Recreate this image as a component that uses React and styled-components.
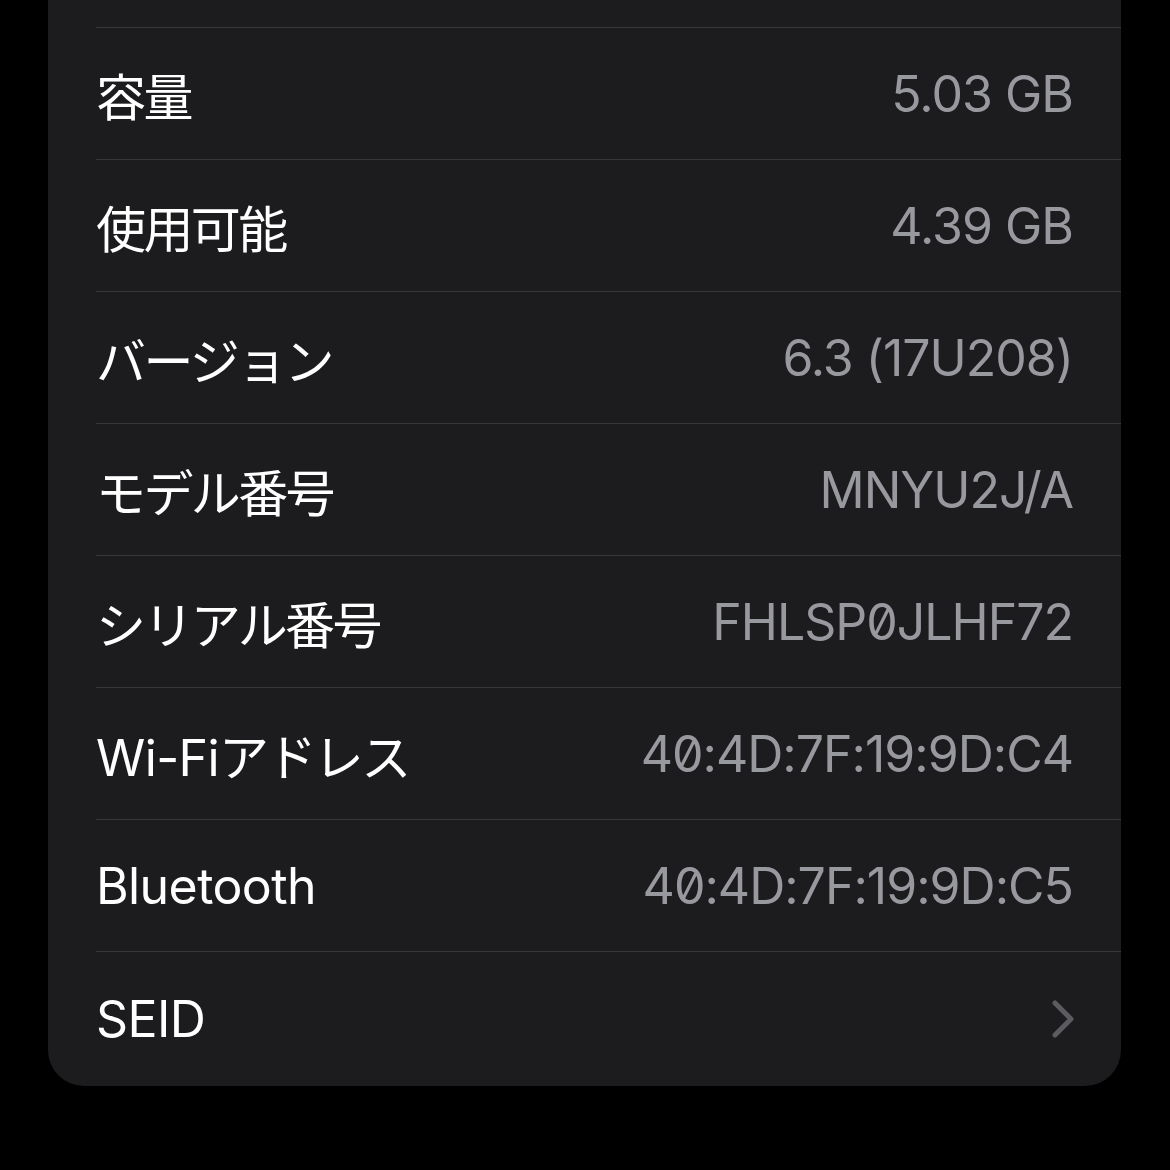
import React from "react";
import styled, { createGlobalStyle } from "styled-components";

const GlobalStyle = createGlobalStyle`
  html, body {
    margin: 0;
    background: #000;
  }
  body {
    font-family: Inter, "Noto Sans CJK JP", sans-serif;
    -webkit-font-smoothing: antialiased;
  }
`;

const Page = styled.div`
  background: #000;
  min-height: 1170px;
  padding: 0 49px 0 48px;
`;

const Card = styled.section`
  background: #1c1c1e;
  border-radius: 0 0 36px 36px;
  padding-top: 27px;
  overflow: hidden;
`;

const Row = styled.div`
  display: flex;
  align-items: center;
  justify-content: space-between;
  height: ${(p) => (p.$last ? 134 : 131)}px;
  margin-left: 48px;
  padding-right: 48px;
  border-top: 1px solid #38383a;
`;

const Label = styled.span`
  color: #fff;
  font-size: 50px;
  letter-spacing: -0.6px;
  font-family: Inter, "Noto Sans CJK JP", sans-serif;
`;

// Japanese runs sit a little tighter than the CJK font's full-width advance
const Jp = styled.span`
  letter-spacing: -2.6px;
`;

const Value = styled.span`
  color: #98989f;
  font-size: 50px;
  letter-spacing: -1px;
  font-feature-settings: ${(p) => (p.$slashed ? '"zero" 1' : "normal")};
`;

const Chevron = styled.svg`
  width: 24px;
  height: 38px;
  margin-right: -2px;
`;

const rows = [
  { label: "容量", value: "5.03 GB" },
  { label: "使用可能", value: "4.39 GB" },
  { label: "バージョン", value: "6.3 (17U208)" },
  { label: "モデル番号", value: "MNYU2J/A" },
  { label: "シリアル番号", value: "FHLSP0JLHF72", slashed: true },
  { label: "Wi-Fiアドレス", value: "40:4D:7F:19:9D:C4", slashed: true },
  { label: "Bluetooth", value: "40:4D:7F:19:9D:C5", slashed: true },
];

function LabelText({ text }) {
  const parts = text.split(/([\u3000-\u9fff\u30a0-\u30ff]+)/).filter(Boolean);
  return (
    <Label>
      {parts.map((part, i) =>
        /[\u3000-\u9fff]/.test(part) ? <Jp key={i}>{part}</Jp> : part
      )}
    </Label>
  );
}

export default function App() {
  return (
    <>
      <GlobalStyle />
      <Page>
        <Card>
          {rows.map((r) => (
            <Row key={r.label}>
              <LabelText text={r.label} />
              <Value $slashed={r.slashed}>{r.value}</Value>
            </Row>
          ))}
          <Row $last>
            <LabelText text="SEID" />
            <Chevron viewBox="0 0 24 38">
              <path
                d="M4 3 L20 19 L4 35"
                fill="none"
                stroke="#5b5b60"
                strokeWidth="5"
                strokeLinecap="round"
                strokeLinejoin="round"
              />
            </Chevron>
          </Row>
        </Card>
      </Page>
    </>
  );
}
